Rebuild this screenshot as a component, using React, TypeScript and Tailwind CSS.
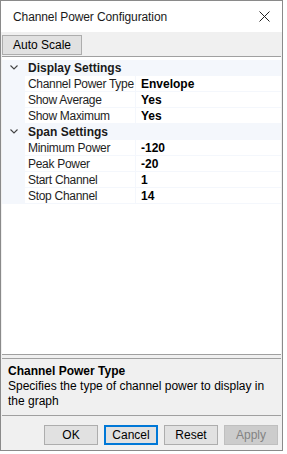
import React from 'react';

type Prop = { label: string; value: string };

const sections: { title: string; props: Prop[] }[] = [
  {
    title: 'Display Settings',
    props: [
      { label: 'Channel Power Type', value: 'Envelope' },
      { label: 'Show Average', value: 'Yes' },
      { label: 'Show Maximum', value: 'Yes' },
    ],
  },
  {
    title: 'Span Settings',
    props: [
      { label: 'Minimum Power', value: '-120' },
      { label: 'Peak Power', value: '-20' },
      { label: 'Start Channel', value: '1' },
      { label: 'Stop Channel', value: '14' },
    ],
  },
];

// Small chevron used to collapse a category
const Chevron: React.FC = () => (
  <svg width="8" height="5" viewBox="0 0 8 5" className="block">
    <path d="M0.5 0.5 L4 4 L7.5 0.5" fill="none" stroke="#444" strokeWidth="1.1" />
  </svg>
);

const DialogButton: React.FC<{ label: string; focused?: boolean; disabled?: boolean }> = ({
  label,
  focused,
  disabled,
}) => (
  <button
    className={`w-[54px] h-[20px] flex items-center justify-center text-[12px] leading-none
      ${disabled
        ? 'bg-[#cccccc] border border-[#bfbfbf] text-[#838383]'
        : focused
          ? 'bg-[#e1e1e1] border-2 border-[#0078d7] text-black'
          : 'bg-[#e1e1e1] border border-[#adadad] text-black'
      }`}
  >
    {label}
  </button>
);

const App: React.FC = () => {
  return (
    <div className="w-[287px] h-[454px] bg-white font-['Liberation_Sans',Arial,sans-serif] text-[12px] text-black">
      <div className="w-[283px] h-[451px] border border-[#8a8a8a] flex flex-col">
        {/* Title bar */}
        <div className="h-[31px] bg-white flex items-center justify-between pl-[12px] pr-[12px]">
          <span className="text-[12px] tracking-[-0.1px] text-[#1a1a1a]">Channel Power Configuration</span>
          <svg width="11" height="11" viewBox="0 0 11 11">
            <path d="M0.5 0.5 L10.5 10.5 M10.5 0.5 L0.5 10.5" stroke="#222" strokeWidth="1" />
          </svg>
        </div>

        <div className="flex-1 bg-[#f0f0f0] flex flex-col">
          {/* Toolbar */}
          <div className="h-[24px] pt-[3px] pl-[1px]">
            <button className="h-[20px] px-[10px] bg-[#e1e1e1] border border-[#adadad] text-[12px] leading-none text-black">
              Auto Scale
            </button>
          </div>

          {/* Property grid */}
          <div className="h-[299px] mx-[1px] border-t border-b border-[#a0a0a0] bg-white pt-[3px]">
            {sections.map((s) => (
              <div key={s.title}>
                <div className="h-[16px] bg-[#f4f7fc] flex items-center border-b border-[#f4f7fc]">
                  <div className="w-[23px] flex justify-start pl-[8px]">
                    <Chevron />
                  </div>
                  <span className="font-bold text-[#1a1a1a] pl-[3px]">{s.title}</span>
                </div>
                {s.props.map((p) => (
                  <div key={p.label} className="h-[16px] flex border-b border-[#f4f7fc]">
                    <div className="w-[23px] bg-[#f4f7fc]" />
                    <div className="w-[111px] pl-[3px] flex items-center border-r border-[#f4f7fc] text-[#1e1e1e] tracking-[-0.3px] whitespace-nowrap overflow-hidden">
                      {p.label}
                    </div>
                    <div className="flex-1 pl-[5px] flex items-center font-bold">{p.value}</div>
                  </div>
                ))}
              </div>
            ))}
          </div>

          {/* Description pane */}
          <div className="h-[58px] mt-[3px] mx-[1px] border-t border-b border-[#a0a0a0] px-[6px] pt-[5px] leading-[15px]">
            <div className="font-bold">Channel Power Type</div>
            <div>Specifies the type of channel power to display in the graph</div>
          </div>

          {/* Buttons */}
          <div className="flex-1 flex items-start justify-end gap-[6px] pt-[9px] pr-[4px]">
            <DialogButton label="OK" />
            <DialogButton label="Cancel" focused />
            <DialogButton label="Reset" />
            <DialogButton label="Apply" disabled />
          </div>
        </div>
      </div>
    </div>
  );
};

export default App;
